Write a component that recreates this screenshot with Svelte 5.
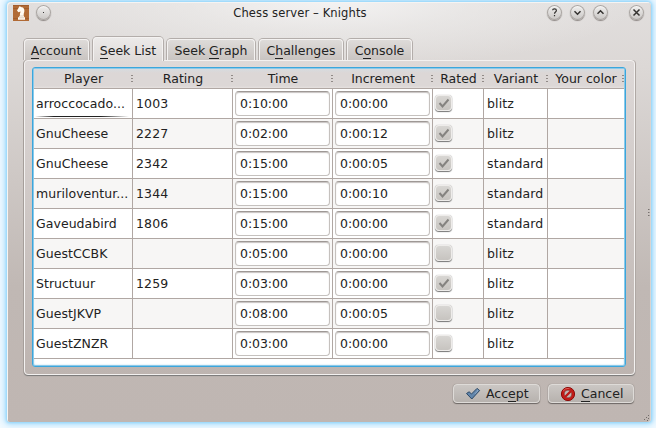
<script>
  const tabs = [
    ['', 'A', 'ccount', 65],
    ['', 'S', 'eek List', 70],
    ['Seek ', 'G', 'raph', 88],
    ['C', 'h', 'allenges', 84],
    ['C', 'o', 'nsole', 65]
  ];
  const columns = ['Player', 'Rating', 'Time', 'Increment', 'Rated', 'Variant', 'Your color'];
  const rows = [
    ['arroccocado...', '1003', '0:10:00', '0:00:00', true, 'blitz'],
    ['GnuCheese', '2227', '0:02:00', '0:00:12', true, 'blitz'],
    ['GnuCheese', '2342', '0:15:00', '0:00:05', true, 'standard'],
    ['muriloventur...', '1344', '0:15:00', '0:00:10', true, 'standard'],
    ['Gaveudabird', '1806', '0:15:00', '0:00:00', true, 'standard'],
    ['GuestCCBK', '', '0:05:00', '0:00:00', false, 'blitz'],
    ['Structuur', '1259', '0:03:00', '0:00:00', true, 'blitz'],
    ['GuestJKVP', '', '0:08:00', '0:00:05', false, 'blitz'],
    ['GuestZNZR', '', '0:03:00', '0:00:00', false, 'blitz']
  ];
</script>

<div class="desktop">
  <div class="window">
    <header>
      <svg class="app" width="16" height="16" viewBox="0 0 16 16">
        <rect width="16" height="16" fill="#b16a35" />
        <path d="M0 .5h16M0 3.5h16M0 13.5h16" stroke="#9c5626" stroke-width=".7" />
        <path d="M4 5.6 5.8 2.6 6.8 1 7.8 2C11.3 2 12.2 5.5 10.8 8.5L10.6 11 12 12.8v2H5v-2L6.8 11 7 8.5 7.6 6.6 5.4 7.2Z" fill="#fffaf2" />
        <path d="M6 12.8h5M7.2 11h2.8" stroke="#bba28f" stroke-width=".5" />
      </svg>
      <span class="round menu"><i></i></span>
      <h1>Chess server – Knights</h1>
      <div class="controls">
        <span class="round"><svg viewBox="0 0 15 15"><path d="M5.6 5.2C5.7 3.4 9.4 3.4 9.4 5.4 9.4 7 7.5 7 7.5 8.7M7.5 10v1.3" stroke-width="1.2" /></svg></span>
        <span class="round"><svg viewBox="0 0 15 15"><path d="m4.5 6.2 3 3 3-3" /></svg></span>
        <span class="round"><svg viewBox="0 0 15 15"><path d="m4.5 8.8 3-3 3 3" /></svg></span>
        <span class="round close"><svg viewBox="0 0 15 15"><path d="m4.5 4.5 6 6m0-6-6 6" /></svg></span>
      </div>
    </header>

    <nav>
      {#each tabs as [before, key, after, width], i}
        <div class="tab" class:active={i === 1} style="width:{width}px"><span>{before}<u>{key}</u>{after}</span></div>
      {/each}
    </nav>

    <main>
      <div class="table">
        <div class="row head">
          {#each columns as name}
            <div class="th"><span>{name}</span><svg class="dots" width="2" height="8"><path d="M0 .5h2M0 3.5h2M0 6.5h2" stroke="#918a87" /></svg></div>
          {/each}
        </div>
        {#each rows as [player, rating, time, increment, rated, variant], i}
          <div class="row" class:odd={i % 2 === 1} class:current={i === 0}>
            <div>{player}</div>
            <div>{rating}</div>
            <div class="edit"><span>{time}</span></div>
            <div class="edit"><span>{increment}</span></div>
            <div class="rated">
              <span class="check">
                {#if rated}<svg width="15" height="14"><path d="m3.5 7 3 3.5 6-7" fill="none" stroke="#858380" stroke-width="2" /></svg>{/if}
              </span>
            </div>
            <div>{variant}</div>
            <div></div>
          </div>
        {/each}
      </div>
    </main>

    <footer>
      <button class="accept">
        <svg width="16" height="16" viewBox="0 0 16 16"><path d="m1.5 7.5 2.6-1.7 2.4 2.2L12 2.4 14.6 4.5 6.8 13Z" fill="#6286ac" stroke="#2b4866" stroke-linejoin="round" /><path d="m12 3.8 1 .8-3 3.2" fill="none" stroke="#9fb9d3" stroke-width=".8" /></svg>
        <span>Acc<u>e</u>pt</span>
      </button>
      <button class="cancel">
        <svg width="16" height="16" viewBox="0 0 16 16"><circle cx="8" cy="8" r="6.6" fill="#c51b17" stroke="#8b0c0a" /><circle cx="8" cy="8" r="3.9" fill="#c0b9b5" stroke="#7e1513" stroke-width=".6" /><path d="m5 11 6-6" stroke="#bd1714" stroke-width="2.3" /><path d="M3 5.2Q5 2 9.5 2.2" fill="none" stroke="#e66b64" stroke-width=".8" /></svg>
        <span><u>C</u>ancel</span>
      </button>
    </footer>
    <svg class="side" width="3" height="8"><path d="M1 .5h1.5M1 3.5h1.5M1 6.5h1.5" stroke="#77716e" /></svg>
    <svg class="grip" width="7" height="6"><path d="M5 .5h1M3 2.5h1M5 3.5h1M1 4.5h1M4 5.5h1" stroke="#716b68" /></svg>
  </div>
</div>

<style>
  :global(body) { margin: 0; overflow: hidden; }
  * { box-sizing: border-box; }
  .desktop {
    width: 656px; height: 428px; padding: 2px 5px 7px 7px; overflow: hidden;
    background: #f2faff; font: 12.5px 'DejaVu Sans', sans-serif; color: #222;
  }
  .window {
    position: relative; width: 644px; height: 420px; border-radius: 4px 4px 3px 3px;
    display: flex; flex-direction: column;
    background: radial-gradient(ellipse 310px 66px at 50% 0, #f3f2f2 0, #f0efee88 45%, transparent 100%),
      linear-gradient(#e1dedd 0, #dcd8d6 65px, #c0b8b4 285px, #bfb6b2 100%);
    box-shadow: inset 1px 1px 0 #f5f4f3, inset -1px 0 0 #d9d4d1, 0 0 3px 1px #8fd4fa, 0 0 7px 3px #b7e2fc;
  }
  header { height: 35px; flex: none; display: flex; padding: 3px 7px 0 6px; }
  .app { flex: none; }
  .round {
    width: 15px; height: 15px; flex: none; border-radius: 50%; background: linear-gradient(#f3f2f1, #c8c5c3);
    box-shadow: inset 0 0 0 1px #aaa5a2, inset 0 2px 1px #fff9, 0 1px 1px #8d8784;
  }
  .round svg { display: block; width: 15px; height: 15px; fill: none; stroke: #343230; stroke-width: 1.5; }
  .menu { margin: 0 0 0 7px; display: grid; place-items: center; }
  .menu i { width: 1px; height: 1px; background: #333; }
  h1 { margin: 0; flex: 1; font-size: 11.5px; letter-spacing: .13px; font-weight: 400; line-height: 17px; text-align: center; padding-left: 2px; white-space: nowrap; }
  .controls { display: flex; gap: 8px; }
  .close { margin-left: 13px; }
  nav { height: 23px; display: flex; align-items: flex-end; gap: 4px; padding-left: 17px; flex: none; position: relative; z-index: 1; }
  .tab {
    height: 21px; flex: none; border-radius: 4px 4px 0 0; text-align: center; line-height: 21px; white-space: nowrap;
    background: linear-gradient(#dedbd9, #c9c4c1); border: 1px solid #f4f2f1; border-bottom: 0;
    box-shadow: 0 0 0 1px #b3adaa; clip-path: inset(-1px -1px 0 -1px);
  }
  .tab:first-child { padding-right: 1px; }
  .tab.active { height: 24px; margin-bottom: -1px; background: linear-gradient(#eceae9, #dedad8); line-height: 25px; }
  u { text-decoration: none; box-shadow: 0 1px #222; display: inline-block; line-height: 15px; }
  main {
    margin: 0 16px 0 17px; height: 315px; flex: none; border: 1px solid #f3f1f0; border-radius: 4px; padding: 6px 7px 8px;
    box-shadow: 0 1px 1px #777, -1px 0 0 #aaa29e, 1px 0 0 #b5ada9;
    background: linear-gradient(#ded9d8, #bdb4b0);
  }
  .table {
    height: 300px; width: 594px; border: 1px solid #3ba6dc; border-radius: 3px; padding: 1px 0 0; background: #fff;
    box-shadow: inset 0 0 0 1px #8bc9e9, inset 0 0 2px 1px #b8ddef; overflow: hidden;
  }
  .row {
    height: 30px; margin: 0 1px; display: grid; grid-template-columns: 99px 100px 100px 100px 51px 64px 76px;
    border-bottom: 1px solid #b0a7a3; background: #fff; position: relative; letter-spacing: .12px;
  }
  .row > div { border-right: 1px solid #b0a7a3; padding-left: 3px; line-height: 30px; white-space: nowrap; }
  .row > div:first-child { padding-left: 2px; letter-spacing: .05px; }
  .row > div:last-child { border-right: 0; }
  .odd { background: #f7f6f5; }
  .head { height: 20px; background: linear-gradient(#d6dbdf, #dcd7d6 4px, #dcd7d6 17px, #e5e1df); letter-spacing: 0; }
  .row > .th, .row > .th:first-child { border: 0; padding: 0; text-align: center; line-height: 20px; position: relative; }
  .dots { position: absolute; right: 0; top: 6px; }
  .current::after {
    content: ''; position: absolute; left: 1px; width: 94px; bottom: 1px; height: 1px;
    background: linear-gradient(90deg, transparent, #222 20%, #222 70%, transparent);
  }
  .row > .edit { padding: 2px 2px 2px 2px; }
  .edit span {
    display: block; height: 25px; line-height: 24px; padding-left: 4px; border: 1px solid #c5c1be; border-top-color: #9e9895;
    border-radius: 4px; background: #fff; box-shadow: inset 0 1px 1px #c7c3c1; letter-spacing: -.05px;
  }
  .row > .rated { padding: 6px 0 0 2px; }
  .check {
    display: block; width: 17px; height: 16px; border: 1px solid #eeecea; border-radius: 4px;
    background: linear-gradient(#d8d6d3, #c7c4c0); box-shadow: 0 1px 1px #777, 0 0 1px #8b8783;
  }
  .check svg { display: block; }
  footer { display: flex; justify-content: flex-end; gap: 8px; padding: 9px 17px 0 0; }
  button {
    font: inherit; color: inherit; height: 19px; padding: 0; border: 1px solid #dedbd8; border-radius: 4px;
    background: linear-gradient(#cbc7c4, #b7b2ae); box-shadow: 0 1px 1px #6c6764, 0 0 1px #827b78;
    display: flex; align-items: center; gap: 5px; line-height: 17px;
  }
  .accept { width: 87px; padding-left: 11px; }
  .cancel { width: 86px; padding-left: 11px; }
  .side { position: absolute; right: 1px; top: 207px; }
  .grip { position: absolute; right: 1px; bottom: 1px; }
</style>
